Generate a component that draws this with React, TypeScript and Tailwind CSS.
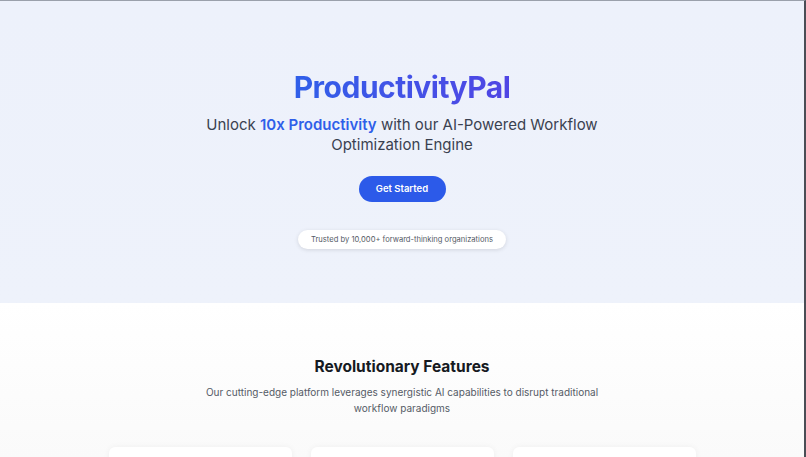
import React from "react";

export default function App() {
  return (
    <div
      className="w-[806px] h-[457px] overflow-hidden border-t border-t-[#9aa0ab] border-r-2 border-r-[#4a4d55] bg-white"
      style={{ fontFamily: "Inter, 'Noto Sans', sans-serif" }}
    >
      <section className="h-[302px] bg-gradient-to-b from-[#edf1fb] to-[#eef2fb] flex flex-col items-center pt-[66px]">
        <h1 className="text-[30px] leading-[40px] font-bold tracking-[-0.5px] bg-gradient-to-r from-[#2f5fe9] to-[#4f45e4] bg-clip-text text-transparent">
          ProductivityPal
        </h1>
        <p className="mt-[8px] text-[15px] leading-[20px] text-[#3a4150] text-center w-[420px]">
          Unlock <span className="text-[#2f5fe9] font-semibold">10x Productivity</span> with our AI-Powered Workflow Optimization Engine
        </p>
        <button className="mt-[21px] h-[26px] w-[87px] rounded-full bg-[#2c5ae9] text-white text-[9.5px] font-semibold">
          Get Started
        </button>
        <div className="mt-[28px] h-[19px] px-[13px] rounded-full bg-white shadow-[0_1px_4px_rgba(0,0,0,0.12)] flex items-center text-[7.6px] text-[#555b66]">
          Trusted by 10,000+ forward-thinking organizations
        </div>
      </section>
      <section className="h-[155px] bg-gradient-to-b from-white to-[#fafafa] flex flex-col items-center pt-[53px]">
        <h2 className="text-[15.5px] leading-[22px] font-bold text-[#161a22]">Revolutionary Features</h2>
        <p className="mt-[6px] text-[10px] leading-[16px] text-[#555b66] text-center w-[400px]">
          Our cutting-edge platform leverages synergistic AI capabilities to disrupt traditional workflow paradigms
        </p>
        <div className="mt-[31px] flex gap-[19px]">
          <div className="w-[183px] h-[60px] bg-white rounded-[6px] shadow-[0_0_6px_rgba(0,0,0,0.05)]" />
          <div className="w-[183px] h-[60px] bg-white rounded-[6px] shadow-[0_0_6px_rgba(0,0,0,0.05)]" />
          <div className="w-[183px] h-[60px] bg-white rounded-[6px] shadow-[0_0_6px_rgba(0,0,0,0.05)]" />
        </div>
      </section>
    </div>
  );
}
